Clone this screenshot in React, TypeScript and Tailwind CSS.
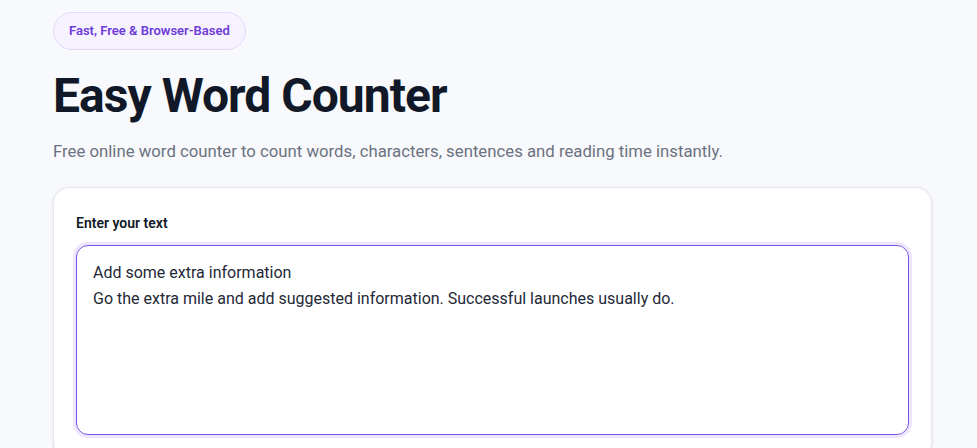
import { useState } from 'react';

export default function App() {
  const [text, setText] = useState(
    'Add some extra information\nGo the extra mile and add suggested information. Successful launches usually do.'
  );

  return (
    <div
      className="min-h-screen bg-[#f8f9fc] pt-3 pb-10"
      style={{ fontFamily: 'Roboto, "Liberation Sans", sans-serif' }}
    >
      <div className="ml-[53px] w-[879px]">
        <span className="inline-flex h-[38px] items-center rounded-full border border-[#e4d8fd] bg-[#f7f2ff] px-[15px] text-[13px] font-semibold text-[#6d3bd8]">
          Fast, Free &amp; Browser-Based
        </span>

        <h1 className="mt-[18px] text-5xl font-bold leading-[56px] tracking-[-0.02em] text-[#111827]">
          Easy Word Counter
        </h1>

        <p className="mt-[15px] text-[16.75px] leading-6 text-[#6b7280]">
          Free online word counter to count words, characters, sentences and reading time instantly.
        </p>

        <div className="mt-6 rounded-2xl border border-[#e5e7eb] bg-white px-[22px] pt-[25px] pb-6 shadow-sm">
          <label className="block text-sm font-semibold text-[#111827]">Enter your text</label>
          <textarea
            value={text}
            onChange={(e) => setText(e.target.value)}
            spellCheck={false}
            className="mt-[12px] block h-[190px] w-full resize-none rounded-xl border-[1.5px] border-[#7357e6] px-4 py-[14px] text-base leading-[26px] text-[#1f2937] outline-none ring-[3px] ring-[#eee5fe]"
          />
        </div>
      </div>
    </div>
  );
}
